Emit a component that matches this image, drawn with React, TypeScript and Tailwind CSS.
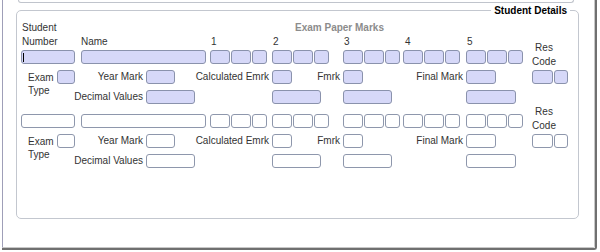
import React from "react";

const filled = "bg-[#d6d8f8] border-[#8a92ac]";
const empty = "bg-white border-[#8e97ac]";

function Box({ w, on, caret }: { w: string; on: boolean; caret?: boolean }) {
  return (
    <div className={`relative h-[14px] shrink-0 border rounded-[3px] ${w} ${on ? filled : empty}`}>
      {caret && <div className="absolute left-[1px] top-[2px] w-px h-[9px] bg-black" />}
    </div>
  );
}

function Group({ on, ml }: { on: boolean; ml: string }) {
  return (
    <div className={`flex gap-px shrink-0 ${ml}`}>
      <Box w="w-[20px]" on={on} />
      <Box w="w-[20px]" on={on} />
      <Box w="w-[15px]" on={on} />
    </div>
  );
}

function Label({ w, text }: { w: string; text: string }) {
  return <div className={`${w} shrink-0 text-right leading-[14px] whitespace-nowrap`}>{text}</div>;
}

function Block({ on, header }: { on: boolean; header?: boolean }) {
  return (
    <div className="flex flex-col">
      {header && (
        <div className="leading-[14px] mb-px">
          <div className="flex">
            <div className="w-[274px] pl-px">Student</div>
            <div className="font-bold text-[#8c8c8c]">Exam Paper Marks</div>
          </div>
          <div className="flex">
            <div className="w-[60px] pl-px">Number</div>
            <div className="w-[129px]">Name</div>
            <div className="flex">
              <div className="w-[62px] pl-px">1</div>
              <div className="w-[71px] pl-px">2</div>
              <div className="w-[60px] pl-px">3</div>
              <div className="w-[63px] pl-[2px]">4</div>
              <div className="pl-px">5</div>
            </div>
          </div>
        </div>
      )}
      {/* marks row */}
      <div className="flex items-start h-[14px]">
        <Box w="w-[54px]" on={on} caret={on} />
        <div className="ml-[6px]">
          <Box w="w-[125px]" on={on} />
        </div>
        <Group on={on} ml="ml-[4px]" />
        <Group on={on} ml="ml-[5px]" />
        <Group on={on} ml="ml-[14px]" />
        <Group on={on} ml="ml-[3px]" />
        <Group on={on} ml="ml-[6px]" />
        <div className="ml-[8px] w-[26px] -mt-[9px] text-center leading-[14px]">
          Res
          <br />
          Code
        </div>
      </div>
      <div className="flex items-start mt-[6px]">
        <div className="w-[33px] shrink-0 pl-[7px] pt-px leading-[13px]">
          Exam
          <br />
          Type
        </div>
        <div className="flex flex-col gap-[6px]">
          <div className="flex items-start">
            <div className="ml-[3px]">
              <Box w="w-[18px]" on={on} />
            </div>
            <Label w="w-[68px]" text="Year Mark" />
            <div className="ml-[3px]">
              <Box w="w-[29px]" on={on} />
            </div>
            <Label w="w-[94px]" text="Calculated Emrk" />
            <div className="ml-[3px]">
              <Box w="w-[20px]" on={on} />
            </div>
            <Label w="w-[48px]" text="Fmrk" />
            <div className="ml-[3px]">
              <Box w="w-[20px]" on={on} />
            </div>
            <Label w="w-[100px]" text="Final Mark" />
            <div className="ml-[3px]">
              <Box w="w-[30px]" on={on} />
            </div>
            <div className="ml-[36px] flex gap-px">
              <Box w="w-[21px]" on={on} />
              <Box w="w-[14px]" on={on} />
            </div>
          </div>
          <div className="flex items-start">
            <Label w="w-[89px]" text="Decimal Values" />
            <div className="ml-[3px]">
              <Box w="w-[49px]" on={on} />
            </div>
            <div className="ml-[77px]">
              <Box w="w-[49px]" on={on} />
            </div>
            <div className="ml-[22px]">
              <Box w="w-[49px]" on={on} />
            </div>
            <div className="ml-[74px]">
              <Box w="w-[50px]" on={on} />
            </div>
          </div>
        </div>
      </div>
    </div>
  );
}

export default function App() {
  return (
    <div className="w-[600px] h-[252px] bg-white overflow-hidden font-['Liberation_Sans',Arial,sans-serif] text-[10px] text-[#333]">
      <div className="ml-[2px] w-[595px] h-[250px] border-r-2 border-b-2 border-[#707070] rounded-br-[3px]">
        <div className="h-full border-l border-l-[#9f9fb8] border-r border-b border-r-[#c8c8c8] border-b-[#c8c8c8] rounded-br-[2px]">
          <div className="ml-[15px] w-[556px] h-[3px] border-b border-x border-[#c0c4cc] rounded-b-[4px]" />
          <div className="relative mt-[7px] ml-[13px] w-[563px] h-[209px] border border-[#c3c7cf] rounded-[5px] pl-[4px] pt-[10px]">
            <div className="absolute right-[8px] -top-[7px] bg-white px-[3px] font-bold text-black leading-[14px]">
              Student Details
            </div>
            <Block on header />
            <div className="mt-[10px]">
              <Block on={false} />
            </div>
          </div>
        </div>
      </div>
    </div>
  );
}
